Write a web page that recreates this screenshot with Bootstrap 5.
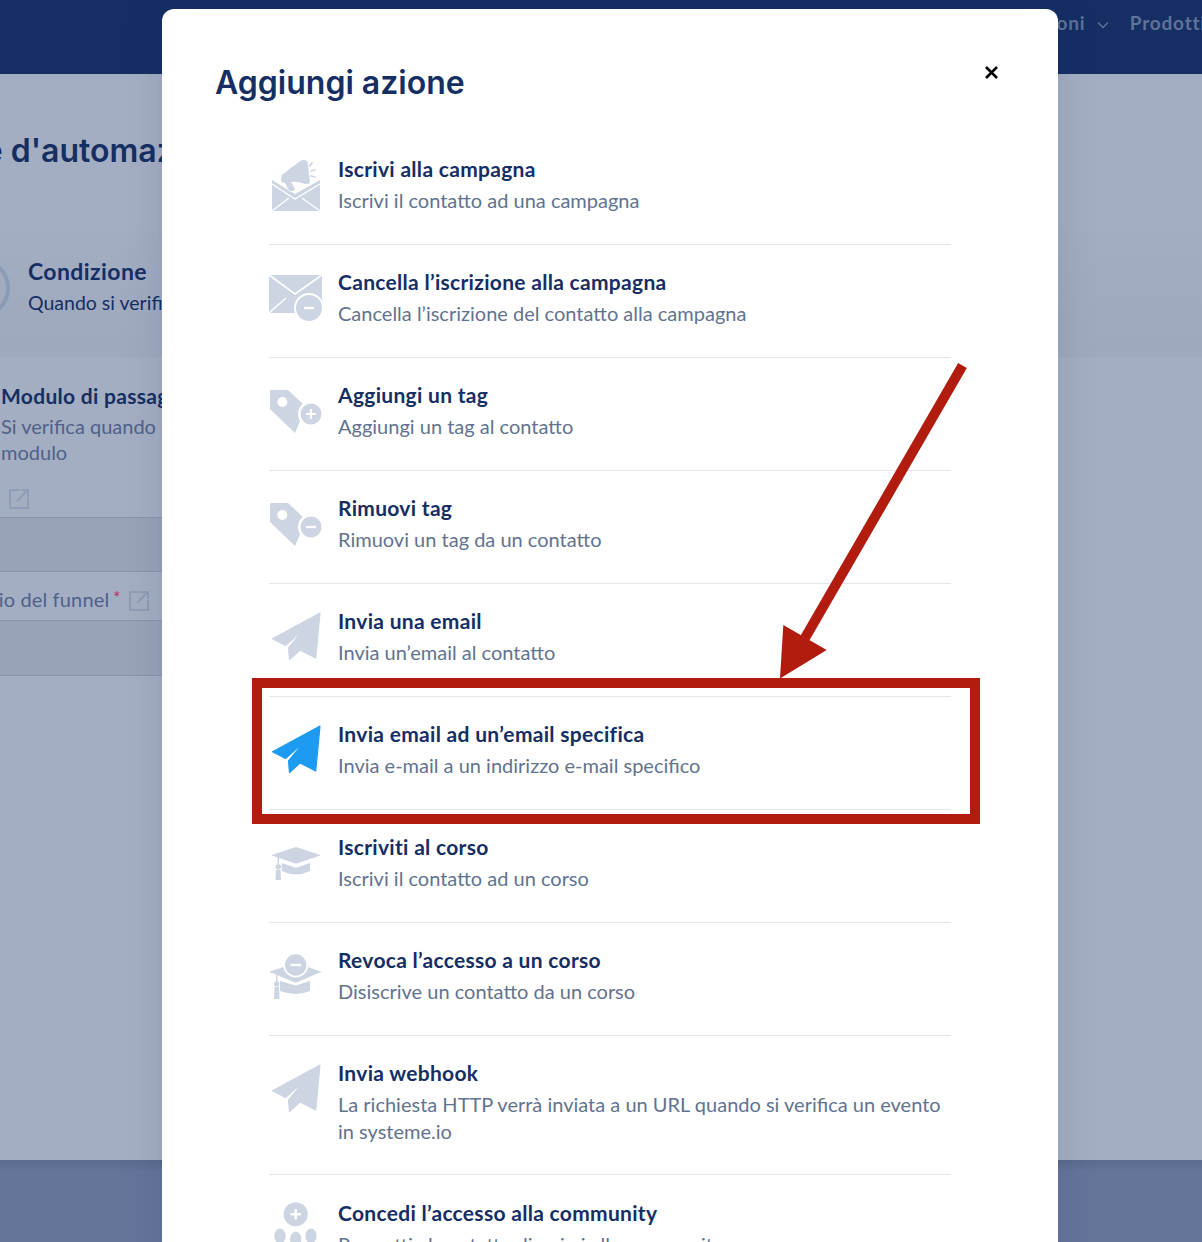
<!DOCTYPE html>
<html lang="it">
<head>
  <meta charset="UTF-8" />
  <title>Aggiungi azione</title>
  <meta name="viewport" content="width=device-width, initial-scale=1">
  <link href="https://cdn.jsdelivr.net/npm/bootstrap@5.3.3/dist/css/bootstrap.min.css" rel="stylesheet">
  <style>
    html, body { height: 100%; overflow: hidden; }
    body { background-color: #a4aec2; font-family: Lato, sans-serif; color: #152e63; }
    .page-wrap { height: 1242px; overflow: hidden; }
    .top-bar { height: 74px; background-color: #152e63; color: #5f7299; font-size: 19px; font-weight: 700; letter-spacing: .8px; padding-top: 9px; }
    .top-bar-item { white-space: nowrap; }
    .top-bar-last { margin-left: 21px; margin-right: -4px; }
    .top-bar-caret { margin-left: 6px; }
    .page-head { height: 156px; padding-top: 55px; overflow: hidden; }
    .page-title { font-family: Inter, sans-serif; font-size: 32px; font-weight: 600; line-height: 44px; margin: 0 0 0 -155px; white-space: nowrap; }
    .cond-row { height: 127px; background: linear-gradient(#a3adc1, #9fa9be); gap: 18px; padding-top: 27px; }
    .cond-ring { width: 60px; height: 60px; border: 4px solid #8c9bb5; border-radius: 50%; margin: 1px 0 0 -50px; flex: none; }
    .cond-name { font-size: 23px; font-weight: 700; letter-spacing: .4px; line-height: 28px; white-space: nowrap; }
    .cond-desc { font-size: 19.5px; line-height: 32px; margin-top: 2px; white-space: nowrap; }
    .form-side { width: 400px; height: 803px; padding-top: 26px; }
    .side-title { font-size: 21px; font-weight: 700; letter-spacing: .3px; line-height: 26px; white-space: nowrap; padding-left: 1px; }
    .side-text { font-size: 20px; line-height: 26px; color: #4f618a; width: 300px; margin-top: 4px; padding-left: 1px; }
    .side-link { margin: 20px 0 0 8px; height: 32px; }
    .band { height: 54px; background-color: #98a3b8; border-top: 1px solid #8a96ae; }
    .field-line { height: 49px; border-top: 1px solid #8a96ae; color: #4f618a; font-size: 20px; letter-spacing: .15px; padding-top: 12px; white-space: nowrap; }
    .field-line-text { margin-left: -72px; }
    .field-line svg { margin: 6px 0 0 7px; }
    .req-mark { color: #c02a5f; font-size: 17px; margin-left: 4px; vertical-align: 3px; }
    .band-end { height: 56px; border-bottom: 1px solid #8a96ae; }
    .page-foot { height: 120px; background: linear-gradient(#5a6a8c, #65759a 12px); }
    .sheet { top: 9px; left: 162px; width: 896px; height: 1300px; border: 0; border-radius: 12px; box-shadow: 0 0 40px rgba(21, 46, 99, .14); }
    .sheet-head { padding: 55px 60px 0 53px; height: 123px; }
    .sheet-title { font-family: Inter, sans-serif; font-size: 32px; font-weight: 600; line-height: 38px; margin: 0; color: #152e63; }
    .close-x { color: #000; line-height: 1; margin-top: 2px; }
    .action-list { margin: 0 107px; }
    .action-item { padding: 24px 0 0; border-color: #e2e5ea; gap: 16px; background: transparent; height: 113px; }
    .action-item.tall { height: 139px; }
    .action-item.final .action-name { margin-top: 1px; }
    .action-icon { width: 54px; height: 56px; margin: 0 0 0 -1px; flex: none; color: #cdd5e3; }
    .action-icon.on { color: #1d9bf0; }
    .action-name { font-size: 21px; font-weight: 700; letter-spacing: .3px; line-height: 26px; color: #152e63; }
    .action-desc { font-size: 20px; line-height: 27px; margin-top: 5px; color: #62738f; }
    .mark-box { top: 678px; left: 252px; width: 728px; height: 146px; border: 10px solid #b21c0e; }
    .mark-arrow { top: 0; left: 0; width: 1202px; height: 1242px; pointer-events: none; }
  </style>
</head>
<body>
  <div class="page-wrap position-relative">
    <div class="top-bar d-flex justify-content-end">
      <span class="top-bar-item">Automazioni
        <svg class="top-bar-caret" width="12" height="8" viewBox="0 0 12 8" fill="none" stroke="currentColor" stroke-width="1.3"><path d="M1 1.5l5 5 5-5"/></svg>
      </span>
      <span class="top-bar-item top-bar-last">Prodotti</span>
    </div>

    <div class="page-head">
      <h1 class="page-title">Creazione d'automazione</h1>
    </div>

    <div class="cond-row d-flex">
      <div class="cond-ring"></div>
      <div>
        <div class="cond-name">Condizione</div>
        <div class="cond-desc">Quando si verifica</div>
      </div>
    </div>

    <div class="form-side">
      <div class="side-title">Modulo di passaggio</div>
      <div class="side-text">Si verifica quando si invia un modulo</div>
      <div class="side-link">
        <svg width="22" height="22" viewBox="0 0 22 22" fill="none" stroke="#8f9cb5" stroke-width="2"><path d="M12 2H2v18h18V10M9 13L20 2M13 2h7v7"/></svg>
      </div>
      <div class="band"></div>
      <div class="field-line d-flex align-items-start">
        <span class="field-line-text">Passaggio del funnel<span class="req-mark">*</span></span>
        <svg width="22" height="22" viewBox="0 0 22 22" fill="none" stroke="#8f9cb5" stroke-width="2"><path d="M12 2H2v18h18V10M9 13L20 2M13 2h7v7"/></svg>
      </div>
      <div class="band band-end"></div>
    </div>

    <div class="page-foot"></div>

    <div class="modal-content sheet position-absolute overflow-hidden bg-white">
      <div class="sheet-head d-flex justify-content-between align-items-start">
        <h2 class="sheet-title">Aggiungi azione</h2>
        <button class="btn p-0 border-0 close-x" aria-label="Chiudi">
          <svg width="13" height="13" viewBox="0 0 13 13" fill="none" stroke="currentColor" stroke-width="2.6" class="d-block"><path d="M1 1l11 11M12 1L1 12"/></svg>
        </button>
      </div>
      <div class="list-group list-group-flush action-list">
        <div class="list-group-item action-item d-flex">
          <svg class="action-icon" viewBox="0 0 54 56" fill="currentColor">
            <path d="M4 24l23 14 25-14v31H4z"/>
            <path d="M4 28l23 15 25-15M4 55l17-13M52 55L34 42" fill="none" stroke="#fff" stroke-width="1.400"/>
            <path d="M14 19Q20 14 33 4.500Q38 3 39.500 6L42 26Q41 29 37 28Q28 25 23 26L27 33Q27 35 23 35Q21 35 20 33L17 27Q13 27 13 23z" stroke="#fff" stroke-width="1.400" paint-order="stroke"/>
            <path d="M44 7l-2.500 3M47 14l-4 1M47 21l-4-1" stroke="currentColor" stroke-width="1.800" stroke-linecap="round" fill="none"/>
          </svg>
          <div><div class="action-name">Iscrivi alla campagna</div><div class="action-desc">Iscrivi il contatto ad una campagna</div></div>
        </div>
        <div class="list-group-item action-item d-flex">
          <svg class="action-icon" viewBox="0 0 54 56" fill="currentColor">
            <path d="M1 6h53v38H1z"/>
            <path d="M1 6l26 19L54 6M1 44l17-15" fill="none" stroke="#fff" stroke-width="1.6"/>
            <circle cx="41" cy="39" r="15" fill="#fff"/><circle cx="41" cy="39" r="13"/>
            <path d="M36 39h10" stroke="#fff" stroke-width="2.4"/>
          </svg>
          <div><div class="action-name">Cancella l’iscrizione alla campagna</div><div class="action-desc">Cancella l’iscrizione del contatto alla campagna</div></div>
        </div>
        <div class="list-group-item action-item d-flex">
          <svg class="action-icon" viewBox="0 0 54 56" fill="currentColor">
            <path d="M2 9q0-1 1-1h17l18 17-11 26-25-24z"/>
            <circle cx="14.300" cy="20" r="5" fill="#fff"/>
            <circle cx="43" cy="32" r="13" fill="#fff"/><circle cx="43" cy="32" r="10.500"/>
            <path d="M38 32h10M43 27v10" stroke="#fff" stroke-width="2.200"/>
          </svg>
          <div><div class="action-name">Aggiungi un tag</div><div class="action-desc">Aggiungi un tag al contatto</div></div>
        </div>
        <div class="list-group-item action-item d-flex">
          <svg class="action-icon" viewBox="0 0 54 56" fill="currentColor">
            <path d="M2 9q0-1 1-1h17l18 17-11 26-25-24z"/>
            <circle cx="14.300" cy="20" r="5" fill="#fff"/>
            <circle cx="43" cy="32" r="13" fill="#fff"/><circle cx="43" cy="32" r="10.500"/>
            <path d="M38 32h10" stroke="#fff" stroke-width="2.200"/>
          </svg>
          <div><div class="action-name">Rimuovi tag</div><div class="action-desc">Rimuovi un tag da un contatto</div></div>
        </div>
        <div class="list-group-item action-item d-flex">
          <svg class="action-icon" viewBox="0 0 54 56" fill="currentColor" stroke="currentColor" stroke-width="1.200" stroke-linejoin="round"><path d="M52 5L4.500 30.700 17.500 37.500 37 20 20.500 40 21.500 51.500 32 42 47.700 50z"/></svg>
          <div><div class="action-name">Invia una email</div><div class="action-desc">Invia un’email al contatto</div></div>
        </div>
        <div class="list-group-item action-item d-flex">
          <svg class="action-icon on" viewBox="0 0 54 56" fill="currentColor" stroke="currentColor" stroke-width="1.200" stroke-linejoin="round"><path d="M52 5L4.500 30.700 17.500 37.500 37 20 20.500 40 21.500 51.500 32 42 47.700 50z"/></svg>
          <div><div class="action-name">Invia email ad un’email specifica</div><div class="action-desc">Invia e-mail a un indirizzo e-mail specifico</div></div>
        </div>
        <div class="list-group-item action-item d-flex">
          <svg class="action-icon" viewBox="0 0 54 56" fill="currentColor">
            <path d="M3 21.300L28 13l25 8.300-25 8.400z"/>
            <path d="M13.700 29l14.300 4.700L42 29v8q-14 7-28.300 0z"/>
            <path d="M10.300 23v12" stroke="currentColor" stroke-width="1.400"/>
            <circle cx="10.300" cy="33" r="2.700"/><path d="M8 36h4.500l.5 10H7.500z"/>
          </svg>
          <div><div class="action-name">Iscriviti al corso</div><div class="action-desc">Iscrivi il contatto ad un corso</div></div>
        </div>
        <div class="list-group-item action-item d-flex">
          <svg class="action-icon" viewBox="0 0 54 56" fill="currentColor">
            <path d="M1 24.700L27.700 16l26 8.700-26 11z"/>
            <path d="M12 34l15.700 4.500L42 34v10q-14 6-30 0z"/>
            <path d="M8.700 26v10" stroke="currentColor" stroke-width="1.400"/>
            <circle cx="8.700" cy="37" r="2.700"/><path d="M6.500 40h4.500l.5 12H6z"/>
            <circle cx="27.700" cy="18" r="12.500" fill="#fff"/><circle cx="27.700" cy="18" r="10.700"/>
            <path d="M22.500 18h10.400" stroke="#fff" stroke-width="2.400"/>
          </svg>
          <div><div class="action-name">Revoca l’accesso a un corso</div><div class="action-desc">Disiscrive un contatto da un corso</div></div>
        </div>
        <div class="list-group-item action-item tall d-flex">
          <svg class="action-icon" viewBox="0 0 54 56" fill="currentColor" stroke="currentColor" stroke-width="1.200" stroke-linejoin="round"><path d="M52 5L4.500 30.700 17.500 37.500 37 20 20.500 40 21.500 51.500 32 42 47.700 50z"/></svg>
          <div><div class="action-name">Invia webhook</div><div class="action-desc">La richiesta HTTP verrà inviata a un URL quando si verifica un evento in systeme.io</div></div>
        </div>
        <div class="list-group-item action-item final d-flex border-0">
          <svg class="action-icon" viewBox="0 0 54 56" fill="currentColor">
            <circle cx="27.700" cy="15.300" r="12"/>
            <path d="M22.500 15.300h10.400M27.700 10v10.600" stroke="#fff" stroke-width="2.400"/>
            <ellipse cx="12" cy="37" rx="5.700" ry="7.500"/><ellipse cx="27.700" cy="40.300" rx="5.700" ry="7.500"/><ellipse cx="43" cy="37" rx="5.700" ry="7.500"/>
          </svg>
          <div><div class="action-name">Concedi l’accesso alla community</div><div class="action-desc">Permetti al contatto di unirsi alla community</div></div>
        </div>
      </div>
    </div>

    <div class="mark-box position-absolute"></div>
    <svg class="mark-arrow position-absolute" viewBox="0 0 1202 1242">
      <path d="M962.500 365.500L805 638" stroke="#b21c0e" stroke-width="10" fill="none"/>
      <path d="M780 678.500L783.300 625 826.700 650z" fill="#b21c0e"/>
    </svg>
  </div>
  <script src="https://cdn.jsdelivr.net/npm/bootstrap@5.3.3/dist/js/bootstrap.bundle.min.js"></script>
</body>
</html>
